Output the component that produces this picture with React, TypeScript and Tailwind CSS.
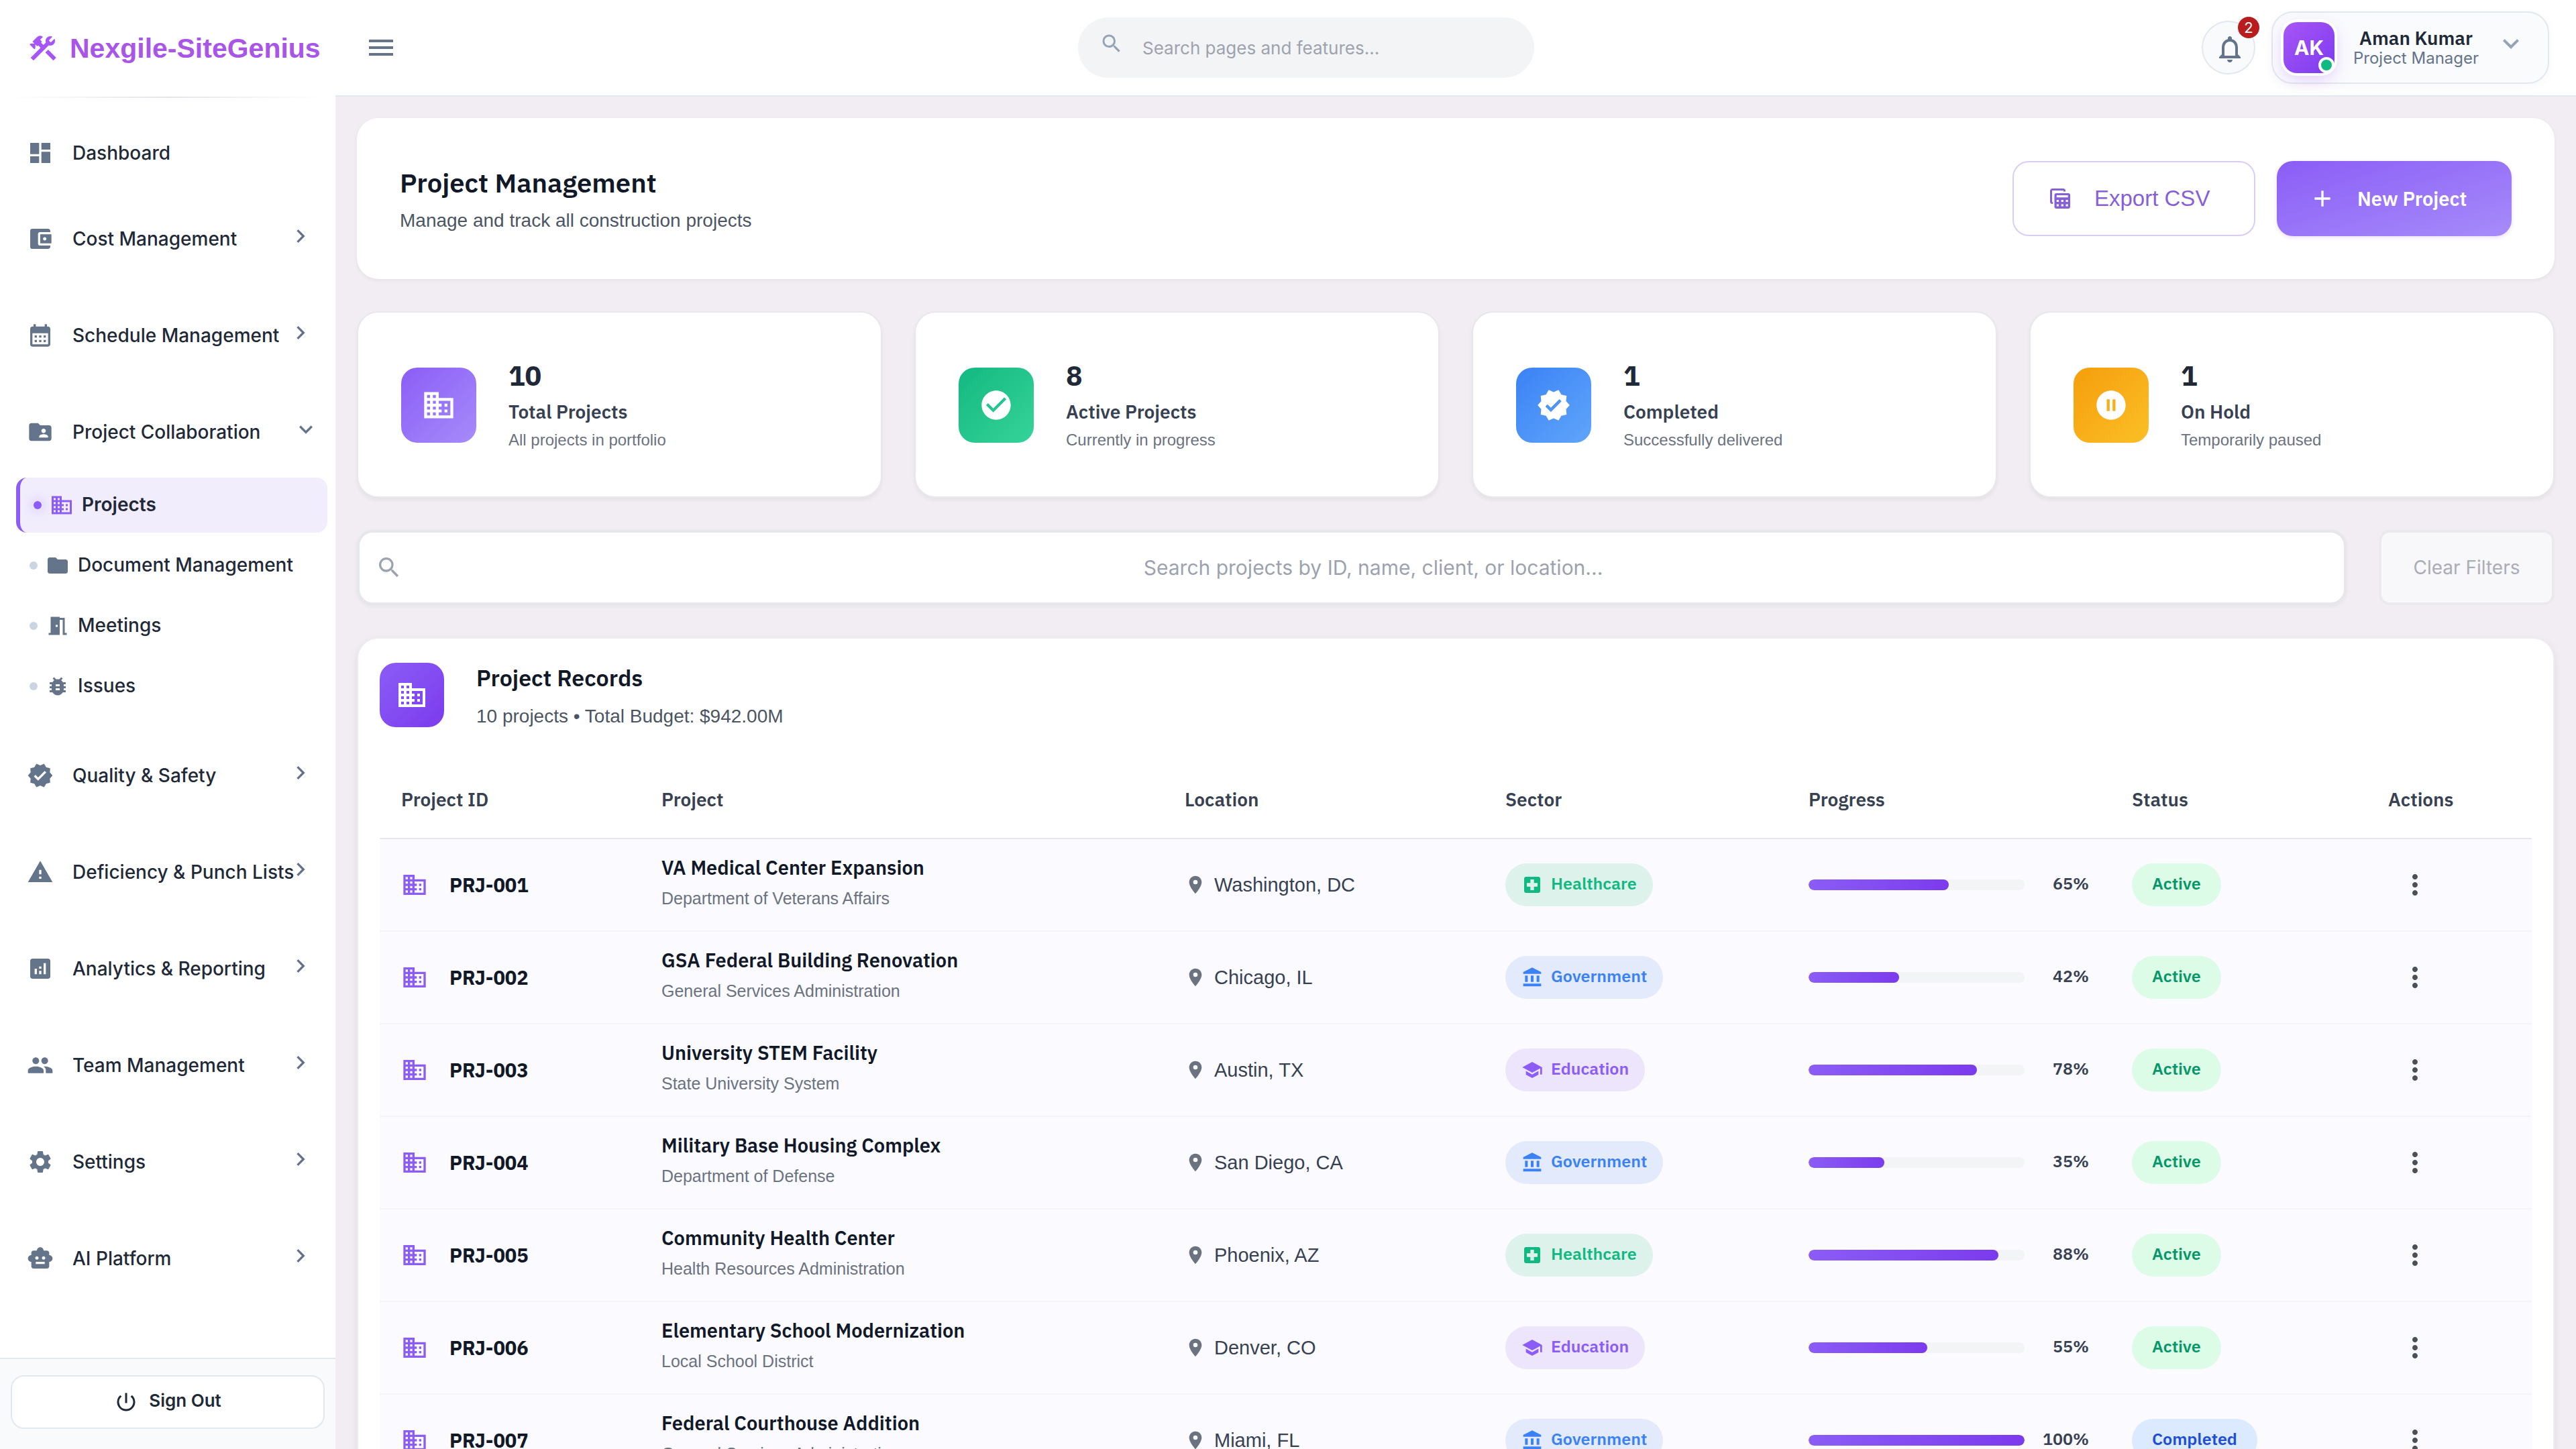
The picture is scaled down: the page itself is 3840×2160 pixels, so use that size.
import type { IconType } from 'react-icons'
import {
  MdAccountBalance,
  MdAccountBalanceWallet,
  MdAdd,
  MdAnalytics,
  MdBugReport,
  MdBusiness,
  MdCalendarMonth,
  MdCheckCircle,
  MdChevronRight,
  MdConstruction,
  MdDashboard,
  MdExpandMore,
  MdFolder,
  MdFolderShared,
  MdLocalHospital,
  MdLocationOn,
  MdMeetingRoom,
  MdMenu,
  MdMoreVert,
  MdNotificationsNone,
  MdPauseCircleFilled,
  MdPeople,
  MdPowerSettingsNew,
  MdSchool,
  MdSearch,
  MdSettings,
  MdSmartToy,
  MdVerified,
  MdWarning,
} from 'react-icons/md'

interface NavItem {
  label: string
  icon: IconType
  children?: { label: string; icon: IconType; active?: boolean }[]
}

const NAV: NavItem[] = [
  { label: 'Cost Management', icon: MdAccountBalanceWallet },
  { label: 'Schedule Management', icon: MdCalendarMonth },
  {
    label: 'Project Collaboration',
    icon: MdFolderShared,
    children: [
      { label: 'Projects', icon: MdBusiness, active: true },
      { label: 'Document Management', icon: MdFolder },
      { label: 'Meetings', icon: MdMeetingRoom },
      { label: 'Issues', icon: MdBugReport },
    ],
  },
  { label: 'Quality & Safety', icon: MdVerified },
  { label: 'Deficiency & Punch Lists', icon: MdWarning },
  { label: 'Analytics & Reporting', icon: MdAnalytics },
  { label: 'Team Management', icon: MdPeople },
  { label: 'Settings', icon: MdSettings },
  { label: 'AI Platform', icon: MdSmartToy },
]

const STATS = [
  { value: 10, label: 'Total Projects', note: 'All projects in portfolio', icon: MdBusiness, tile: 'from-[#8b5cf6] to-[#a78bfa]' },
  { value: 8, label: 'Active Projects', note: 'Currently in progress', icon: MdCheckCircle, tile: 'from-[#10b981] to-[#34d399]' },
  { value: 1, label: 'Completed', note: 'Successfully delivered', icon: MdVerified, tile: 'from-[#3b82f6] to-[#60a5fa]' },
  { value: 1, label: 'On Hold', note: 'Temporarily paused', icon: MdPauseCircleFilled, tile: 'from-[#f59e0b] to-[#fbbf24]' },
]

type Sector = 'Healthcare' | 'Government' | 'Education'
type Status = 'Active' | 'Completed'

interface Project {
  id: string
  name: string
  client: string
  location: string
  sector: Sector
  progress: number
  status: Status
}

const PROJECTS: Project[] = [
  { id: 'PRJ-001', name: 'VA Medical Center Expansion', client: 'Department of Veterans Affairs', location: 'Washington, DC', sector: 'Healthcare', progress: 65, status: 'Active' },
  { id: 'PRJ-002', name: 'GSA Federal Building Renovation', client: 'General Services Administration', location: 'Chicago, IL', sector: 'Government', progress: 42, status: 'Active' },
  { id: 'PRJ-003', name: 'University STEM Facility', client: 'State University System', location: 'Austin, TX', sector: 'Education', progress: 78, status: 'Active' },
  { id: 'PRJ-004', name: 'Military Base Housing Complex', client: 'Department of Defense', location: 'San Diego, CA', sector: 'Government', progress: 35, status: 'Active' },
  { id: 'PRJ-005', name: 'Community Health Center', client: 'Health Resources Administration', location: 'Phoenix, AZ', sector: 'Healthcare', progress: 88, status: 'Active' },
  { id: 'PRJ-006', name: 'Elementary School Modernization', client: 'Local School District', location: 'Denver, CO', sector: 'Education', progress: 55, status: 'Active' },
  { id: 'PRJ-007', name: 'Federal Courthouse Addition', client: 'General Services Administration', location: 'Miami, FL', sector: 'Government', progress: 100, status: 'Completed' },
]

const SECTORS: Record<Sector, { icon: IconType; chip: string }> = {
  Healthcare: { icon: MdLocalHospital, chip: 'bg-[#def2ec] text-[#10b981]' },
  Government: { icon: MdAccountBalance, chip: 'bg-[#e3eafb] text-[#3b82f6]' },
  Education: { icon: MdSchool, chip: 'bg-[#ece5fb] text-[#8b5cf6]' },
}

const STATUSES: Record<Status, string> = {
  Active: 'bg-[#dcfce7] text-[#059669]',
  Completed: 'bg-[#dbeafe] text-[#1d4ed8]',
}

const COLUMNS = [
  { label: 'Project ID', width: 'w-[388px]' },
  { label: 'Project', width: 'w-[780px]' },
  { label: 'Location', width: 'w-[478px]' },
  { label: 'Sector', width: 'w-[452px]' },
  { label: 'Progress', width: 'w-[482px]' },
  { label: 'Status', width: 'w-[382px]' },
  { label: 'Actions', width: 'w-[246px]' },
]

export default function App() {
  return (
    <div className="flex h-screen overflow-hidden bg-[#f1edf3] font-['Inter',sans-serif] text-[#1f2937]">
      <Sidebar />
      <div className="flex min-w-0 flex-1 flex-col">
        <Topbar />
        <main className="flex min-h-0 flex-1 flex-col gap-12 overflow-hidden p-8">
          <PageHeader />
          <section className="grid shrink-0 grid-cols-4 gap-12">
            {STATS.map(s => (
              <StatCard key={s.label} {...s} />
            ))}
          </section>
          <Filters />
          <Records />
        </main>
      </div>
    </div>
  )
}

function Sidebar() {
  return (
    <aside className="flex w-[500px] shrink-0 flex-col bg-white">
      <div className="flex h-36 shrink-0 items-center gap-4 pl-10">
        <MdConstruction className="size-12 text-[#a855f7]" />
        <span className="font-['Liberation_Sans',sans-serif] text-[41px] leading-12 font-bold text-[#a855e8]">
          Nexgile-SiteGenius
        </span>
      </div>
      <div className="mx-4 h-0.5 shrink-0 bg-gradient-to-r from-transparent via-[#e2e4e8] to-transparent" />

      <nav className="flex min-h-0 flex-1 flex-col overflow-hidden pt-[34px]">
        <a href="#dashboard" className="flex h-24 shrink-0 items-center gap-7 pl-10">
          <MdDashboard className="size-10 text-[#64748b]" />
          <span className="text-[28px] leading-10 font-medium">Dashboard</span>
        </a>
        <div className="mt-6 flex flex-col gap-8">
          {NAV.map(item => (
            <NavGroup key={item.label} item={item} />
          ))}
        </div>
      </nav>

      <div className="shrink-0 border-t-2 border-[#e2e8f0] bg-[#f8fafc] px-4 pt-6 pb-[30px]">
        <button className="flex h-20 w-full items-center justify-center gap-4 rounded-[20px] border-2 border-[#e2e8f0] bg-white">
          <MdPowerSettingsNew className="size-9" />
          <span className="pb-1 text-[26px] leading-9 font-semibold">Sign Out</span>
        </button>
      </div>
    </aside>
  )
}

function NavGroup({ item }: { item: NavItem }) {
  const Icon = item.icon
  return (
    <div>
      <button className="flex h-28 w-full items-center pl-10 text-left">
        <Icon className="mr-7 size-10 shrink-0 text-[#64748b]" />
        <span className="flex-1 text-[28px] leading-10 font-medium whitespace-nowrap">{item.label}</span>
        {item.children ? (
          <MdExpandMore className="mr-6 mb-2 size-10 shrink-0 text-[#64748b]" />
        ) : (
          <MdChevronRight className="mr-8 mb-2 -ml-4 size-10 shrink-0 text-[#64748b]" />
        )}
      </button>
      {item.children && (
        <ul className="mt-3 mb-1 flex flex-col gap-2 pr-3 pl-6">
          {item.children.map(({ label, icon: SubIcon, active }) => (
            <li key={label}>
              <a
                href={`#${label.toLowerCase()}`}
                className={`flex h-[82px] items-center rounded-2xl ${active ? 'border-l-6 border-[#8b5cf6] bg-[#f2edfd] pl-5' : 'pl-5'}`}
              >
                <span
                  className={`mr-3 size-3 rounded-full ${active ? 'bg-[#8b5cf6] shadow-[0_0_16px_4px_rgba(139,92,246,0.2)]' : 'bg-[#cbd5e1]'}`}
                />
                <SubIcon className={`mr-3 size-9 ${active ? 'text-[#8b5cf6]' : 'text-[#64748b]'}`} />
                <span className={`pb-0.5 text-[28px] leading-10 ${active ? 'font-semibold' : 'font-medium'}`}>{label}</span>
              </a>
            </li>
          ))}
        </ul>
      )}
    </div>
  )
}

function Topbar() {
  return (
    <header className="flex h-36 shrink-0 items-center justify-between border-b-2 border-[#e2e8f0] bg-white pr-10 pl-11">
      <button aria-label="Toggle menu" className="text-[#64748b]">
        <MdMenu className="size-12" />
      </button>

      <label className="ml-5 flex h-[90px] w-[680px] items-center gap-7 rounded-full bg-[#f3f4f6] pl-8">
        <MdSearch className="mb-3 size-9 text-[#94a3b8]" />
        <input
          aria-label="Search pages"
          placeholder="Search pages and features..."
          className="min-w-0 flex-1 text-[26px] outline-none placeholder:text-[#9ca3af]"
        />
      </label>

      <div className="flex items-center gap-6">
        <button
          aria-label="Notifications"
          className="relative flex size-20 items-center justify-center rounded-full border-2 border-[#e2e8f0] bg-[#f8fafc] pt-1 pl-1 text-[#64748b]"
        >
          <MdNotificationsNone className="size-12" />
          <span className="absolute -top-2 -right-2 flex size-8 items-center justify-center rounded-full bg-[#b91c1c] text-[22px] leading-8 text-white">
            2
          </span>
        </button>
        <button className="flex h-[108px] w-[414px] items-center rounded-[32px] border-2 border-[#e2e8f0] bg-[#fafbfd] pl-4 shadow-[0_4px_16px_rgba(0,0,0,0.03)]">
          <span className="relative flex size-[76px] items-center justify-center rounded-[20px] bg-gradient-to-br from-[#a855f7] to-[#7c3aed] text-[30px] leading-9 font-bold text-white shadow-[0_0_0_4px_#ffffff,0_8px_24px_rgba(168,85,247,0.3)]">
            AK
            <span className="absolute right-0 bottom-0 size-6 rounded-full border-4 border-white bg-[#10b981]" />
          </span>
          <span className="ml-7 flex flex-col items-center">
            <span className="font-['IBM_Plex_Sans','Open_Sans',sans-serif] text-[28px] leading-8 font-semibold">Aman Kumar</span>
            <span className="text-[24px] leading-7 text-[#64748b]">Project Manager</span>
          </span>
          <MdExpandMore className="mb-3 ml-6 size-12 text-[#94a3b8]" />
        </button>
      </div>
    </header>
  )
}

function ExportIcon() {
  return (
    <svg viewBox="0 0 30 30" className="size-[30px]" aria-hidden="true">
      <path
        d="M4.2 21.5H3.5a2 2 0 0 1-2-2V3.5a2 2 0 0 1 2-2H19.5a2 2 0 0 1 2 2V4.5"
        fill="none"
        stroke="currentColor"
        strokeWidth="3"
      />
      <path
        fill="currentColor"
        fillRule="evenodd"
        d="M9.5 7H27a3 3 0 0 1 3 3V27a3 3 0 0 1-3 3H9.500a3 3 0 0 1-3-3V10a3 3 0 0 1 3-3ZM9.800 10V13.300H26.700V10ZM9.800 17V20H13V17ZM16.700 17V20H19.900V17ZM23.500 17V20H26.700V17ZM9.800 23.500V26.500H13V23.500ZM16.700 23.500V26.500H19.900V23.500ZM23.500 23.500V26.500H26.700V23.500Z"
      />
    </svg>
  )
}

function PageHeader() {
  return (
    <section className="flex h-60 shrink-0 items-center justify-between rounded-[32px] bg-white px-16 shadow-[0_2px_6px_rgba(0,0,0,0.06)]">
      <div className="flex flex-col gap-2">
        <h1 className="font-['IBM_Plex_Sans','Open_Sans',sans-serif] text-[40px] leading-[58px] font-semibold text-[#111827]">
          Project Management
        </h1>
        <p className="font-['Liberation_Sans',sans-serif] text-[28px] leading-10 text-[#4b5563]">
          Manage and track all construction projects
        </p>
      </div>
      <div className="flex gap-8">
        <button className="flex h-28 w-[362px] items-center gap-9 rounded-3xl border-2 border-[#d9cdf7] pl-[54px] text-[#8661d6]">
          <ExportIcon />
          <span className="font-['Liberation_Sans',sans-serif] text-[33px] leading-10">Export CSV</span>
        </button>
        <button className="flex h-28 w-[350px] items-center gap-8 rounded-3xl bg-gradient-to-br from-[#8b5cf6] to-[#a78bfa] pl-12 text-white shadow-[0_2px_6px_rgba(139,92,246,0.2)]">
          <MdAdd className="size-10" />
          <span className="font-['IBM_Plex_Sans','Open_Sans',sans-serif] text-[29px] leading-10 font-semibold">
            New Project
          </span>
        </button>
      </div>
    </section>
  )
}

function StatCard({ value, label, note, icon: Icon, tile }: (typeof STATS)[number]) {
  return (
    <div className="flex h-[278px] items-center gap-12 rounded-[32px] border-2 border-[#e8e8ec] bg-white px-16 pt-0.5 shadow-[0_4px_6px_rgba(0,0,0,0.05)]">
      <div className={`flex size-28 items-center justify-center rounded-3xl bg-gradient-to-br text-white ${tile}`}>
        <Icon className="size-[52px]" />
      </div>
      <div className="flex flex-col">
        <span className="font-['IBM_Plex_Sans','Open_Sans',sans-serif] text-[41px] leading-14 font-bold">{value}</span>
        <span className="mt-1 font-['IBM_Plex_Sans','Open_Sans',sans-serif] text-[28px] leading-11 font-semibold text-[#374151]">
          {label}
        </span>
        <span className="font-['Liberation_Sans',sans-serif] text-[24px] leading-10 text-[#6b7280]">{note}</span>
      </div>
    </div>
  )
}

function Filters() {
  return (
    <section className="flex h-28 shrink-0 gap-12">
      <label className="flex flex-1 items-center rounded-3xl border-4 border-[#e6e7eb] bg-white pl-6 shadow-[0_2px_6px_rgba(0,0,0,0.05)]">
        <MdSearch className="size-10 text-[#9ca3af]" />
        <input
          aria-label="Search projects"
          placeholder="Search projects by ID, name, client, or location..."
          className="min-w-0 flex-1 text-center text-[30px] outline-none placeholder:text-[#9ca3af]"
        />
      </label>
      <button
        disabled
        className="w-[262px] rounded-2xl border-4 border-[#ebe9ee] bg-[#f8f7fa] text-[28px] text-[#aaadb5]"
      >
        Clear Filters
      </button>
    </section>
  )
}

function Records() {
  return (
    <section className="shrink-0 rounded-[32px] border-2 border-[#eeecf2] bg-white px-8 pt-9 shadow-[0_4px_12px_rgba(0,0,0,0.08)]">
      <div className="flex h-24 items-center gap-12">
        <div className="flex size-24 items-center justify-center rounded-3xl bg-gradient-to-br from-[#8b5cf6] to-[#7c3aed] text-white">
          <MdBusiness className="size-12" />
        </div>
        <div className="flex flex-col gap-4 pt-1">
          <h2 className="font-['IBM_Plex_Sans','Open_Sans',sans-serif] text-[34px] leading-11 font-semibold text-[#111827]">
            Project Records
          </h2>
          <p className="font-['Liberation_Sans',sans-serif] text-[28px] leading-10 text-[#4b5563]">
            10 projects • Total Budget: $942.00M
          </p>
        </div>
      </div>

      <table className="mt-[50px] w-full table-fixed border-collapse text-left">
        <thead>
          <tr className="h-[116px] border-b-2 border-[#e5e7eb]">
            {COLUMNS.map(c => (
              <th
                key={c.label}
                className={`px-8 font-['IBM_Plex_Sans','Open_Sans',sans-serif] text-[28px] leading-10 font-semibold text-[#374151] ${c.width}`}
              >
                {c.label}
              </th>
            ))}
          </tr>
        </thead>
        <tbody>
          {PROJECTS.map(p => (
            <ProjectRow key={p.id} project={p} />
          ))}
        </tbody>
      </table>
    </section>
  )
}

function ProjectRow({ project: p }: { project: Project }) {
  const { icon: SectorIcon, chip } = SECTORS[p.sector]
  return (
    <tr className="h-[138px] border-b-2 border-[#f3f4f6] bg-[#fafaff]">
      <td className="px-8">
        <div className="flex items-center gap-8">
          <MdBusiness className="size-10 text-[#8b5cf6]" />
          <span className="font-['IBM_Plex_Sans','Open_Sans',sans-serif] text-[29px] leading-10 font-bold text-[#111827]">{p.id}</span>
        </div>
      </td>
      <td className="px-8 pb-1">
        <div className="font-['IBM_Plex_Sans','Open_Sans',sans-serif] text-[29px] leading-11 font-semibold text-[#111827]">{p.name}</div>
        <div className="font-['Liberation_Sans',sans-serif] text-[25px] leading-12 text-[#6b7280]">{p.client}</div>
      </td>
      <td className="px-8">
        <div className="flex items-center gap-3">
          <MdLocationOn className="size-8 text-[#6b7280]" />
          <span className="font-['Liberation_Sans',sans-serif] text-[29px] leading-10 text-[#374151]">{p.location}</span>
        </div>
      </td>
      <td className="px-8">
        <span className={`inline-flex h-16 items-center gap-3 rounded-full px-6 align-middle ${chip}`}>
          <SectorIcon className="size-8" />
          <span className="pb-1 font-['IBM_Plex_Sans','Open_Sans',sans-serif] text-[25px] leading-8 font-semibold">{p.sector}</span>
        </span>
      </td>
      <td className="px-8">
        <div className="flex items-center">
          <div className="h-4 flex-1 overflow-hidden rounded-lg bg-[#f3f4f6]">
            <div
              className="h-full rounded-lg bg-gradient-to-r from-[#8b5cf6] to-[#7c3aed]"
              style={{ width: `${p.progress}%` }}
            />
          </div>
          <span className="w-24 pb-1 text-right font-['IBM_Plex_Sans','Open_Sans',sans-serif] text-[25px] leading-8 font-semibold text-[#374151]">
            {p.progress}%
          </span>
        </div>
      </td>
      <td className="px-8">
        <span
          className={`inline-flex h-16 items-center rounded-full px-[30px] pb-1 align-middle font-['IBM_Plex_Sans','Open_Sans',sans-serif] text-[25px] leading-8 font-semibold ${STATUSES[p.status]}`}
        >
          {p.status}
        </span>
      </td>
      <td className="px-8">
        <button aria-label={`Actions for ${p.id}`} className="block p-4 text-[#4b4f58]">
          <MdMoreVert className="size-12" />
        </button>
      </td>
    </tr>
  )
}
